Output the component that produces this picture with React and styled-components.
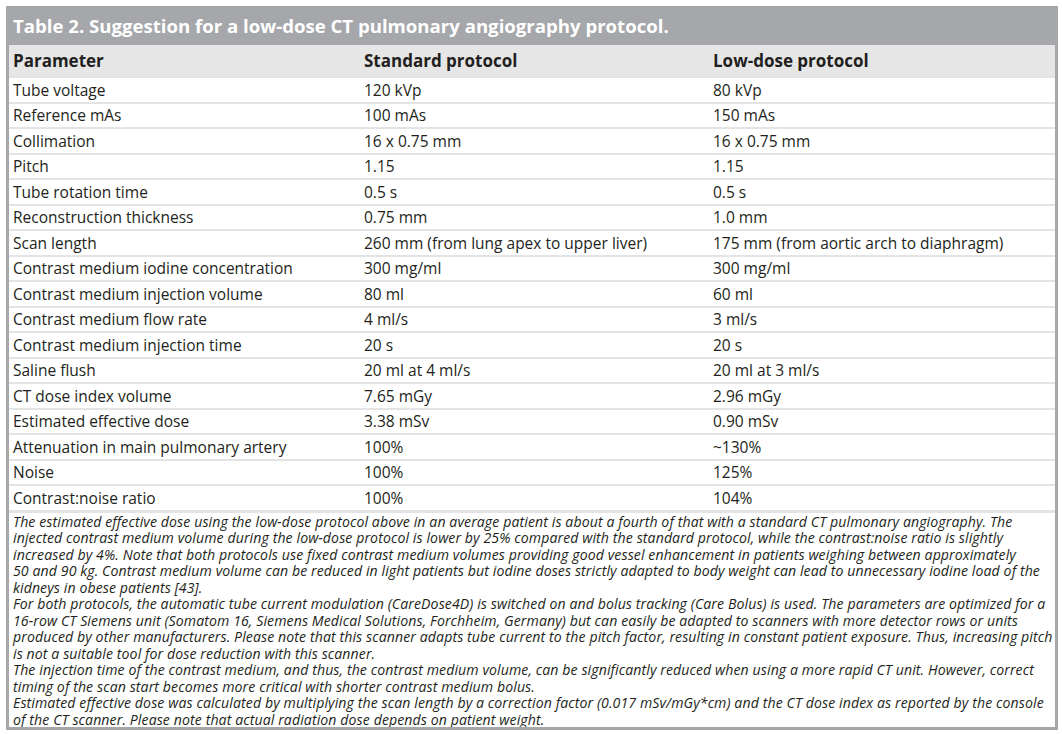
import styled, { createGlobalStyle } from "styled-components";

const GlobalStyle = createGlobalStyle`
  body {
    margin: 0;
    background: #ffffff;
    font-family: "Open Sans", "Liberation Sans", sans-serif;
  }
`;

const Frame = styled.div`
  margin: 6px 0 0 6px;
  width: 1052px;
  height: 724px;
  box-sizing: border-box;
  border: 3px solid #a6a7ab;
  border-top: none;
  display: flex;
  flex-direction: column;
`;

const Caption = styled.div`
  flex-shrink: 0;
  background: #a6a7ab;
  color: #ffffff;
  font-weight: 700;
  font-size: 18.6px;
  height: 39px;
  margin: 0 -3px;
  padding: 0 7px;
  display: flex;
  align-items: center;
`;

const Grid = styled.div`
  flex-shrink: 0;
  display: grid;
  grid-template-columns: 351px 349px 1fr;
`;

const Cell = styled.div`
  height: ${(p) => (p.$head ? "31px" : "23.5px")};
  display: flex;
  align-items: center;
  padding: 0 4px;
  font-size: ${(p) => (p.$head ? "17px" : "15.5px")};
  font-weight: ${(p) => (p.$head ? 700 : 400)};
  color: #231f20;
  background: ${(p) => (p.$head ? "#e6e6e6" : "#ffffff")};
  border-bottom: ${(p) => (p.$last ? "3px" : "2px")} solid #e4e4e4;
  white-space: nowrap;
`;

const Notes = styled.div`
  flex: 1;
  min-height: 0;
  overflow: hidden;
  padding: 1px 4px 0;
  font-size: 14.1px;
  letter-spacing: 0.1px;
  line-height: 16.5px;
  font-style: italic;
  color: #231f20;
`;

const Line = styled.div`
  white-space: nowrap;
`;

const rows = [
  ["Tube voltage", "120 kVp", "80 kVp"],
  ["Reference mAs", "100 mAs", "150 mAs"],
  ["Collimation", "16 x 0.75 mm", "16 x 0.75 mm"],
  ["Pitch", "1.15", "1.15"],
  ["Tube rotation time", "0.5 s", "0.5 s"],
  ["Reconstruction thickness", "0.75 mm", "1.0 mm"],
  ["Scan length", "260 mm (from lung apex to upper liver)", "175 mm (from aortic arch to diaphragm)"],
  ["Contrast medium iodine concentration", "300 mg/ml", "300 mg/ml"],
  ["Contrast medium injection volume", "80 ml", "60 ml"],
  ["Contrast medium flow rate", "4 ml/s", "3 ml/s"],
  ["Contrast medium injection time", "20 s", "20 s"],
  ["Saline flush", "20 ml at 4 ml/s", "20 ml at 3 ml/s"],
  ["CT dose index volume", "7.65 mGy", "2.96 mGy"],
  ["Estimated effective dose", "3.38 mSv", "0.90 mSv"],
  ["Attenuation in main pulmonary artery", "100%", "~130%"],
  ["Noise", "100%", "125%"],
  ["Contrast:noise ratio", "100%", "104%"],
];

const notes = [
  "The estimated effective dose using the low-dose protocol above in an average patient is about a fourth of that with a standard CT pulmonary angiography. The",
  "injected contrast medium volume during the low-dose protocol is lower by 25% compared with the standard protocol, while the contrast:noise ratio is slightly",
  "increased by 4%. Note that both protocols use fixed contrast medium volumes providing good vessel enhancement in patients weighing between approximately",
  "50 and 90 kg. Contrast medium volume can be reduced in light patients but iodine doses strictly adapted to body weight can lead to unnecessary iodine load of the",
  "kidneys in obese patients [43].",
  "For both protocols, the automatic tube current modulation (CareDose4D) is switched on and bolus tracking (Care Bolus) is used. The parameters are optimized for a",
  "16-row CT Siemens unit (Somatom 16, Siemens Medical Solutions, Forchheim, Germany) but can easily be adapted to scanners with more detector rows or units",
  "produced by other manufacturers. Please note that this scanner adapts tube current to the pitch factor, resulting in constant patient exposure. Thus, increasing pitch",
  "is not a suitable tool for dose reduction with this scanner.",
  "The injection time of the contrast medium, and thus, the contrast medium volume, can be significantly reduced when using a more rapid CT unit. However, correct",
  "timing of the scan start becomes more critical with shorter contrast medium bolus.",
  "Estimated effective dose was calculated by multiplying the scan length by a correction factor (0.017 mSv/mGy*cm) and the CT dose index as reported by the console",
  "of the CT scanner. Please note that actual radiation dose depends on patient weight.",
];

export default function App() {
  return (
    <>
      <GlobalStyle />
      <Frame>
        <Caption>Table 2. Suggestion for a low-dose CT pulmonary angiography protocol.</Caption>
        <Grid>
          <Cell $head>Parameter</Cell>
          <Cell $head>Standard protocol</Cell>
          <Cell $head>Low-dose protocol</Cell>
          {rows.map((r, i) =>
            r.map((c, j) => (
              <Cell key={i + "-" + j} $last={i === rows.length - 1}>
                {c}
              </Cell>
            ))
          )}
        </Grid>
        <Notes>
          {notes.map((n, i) => (
            <Line key={i}>{n}</Line>
          ))}
        </Notes>
      </Frame>
    </>
  );
}
